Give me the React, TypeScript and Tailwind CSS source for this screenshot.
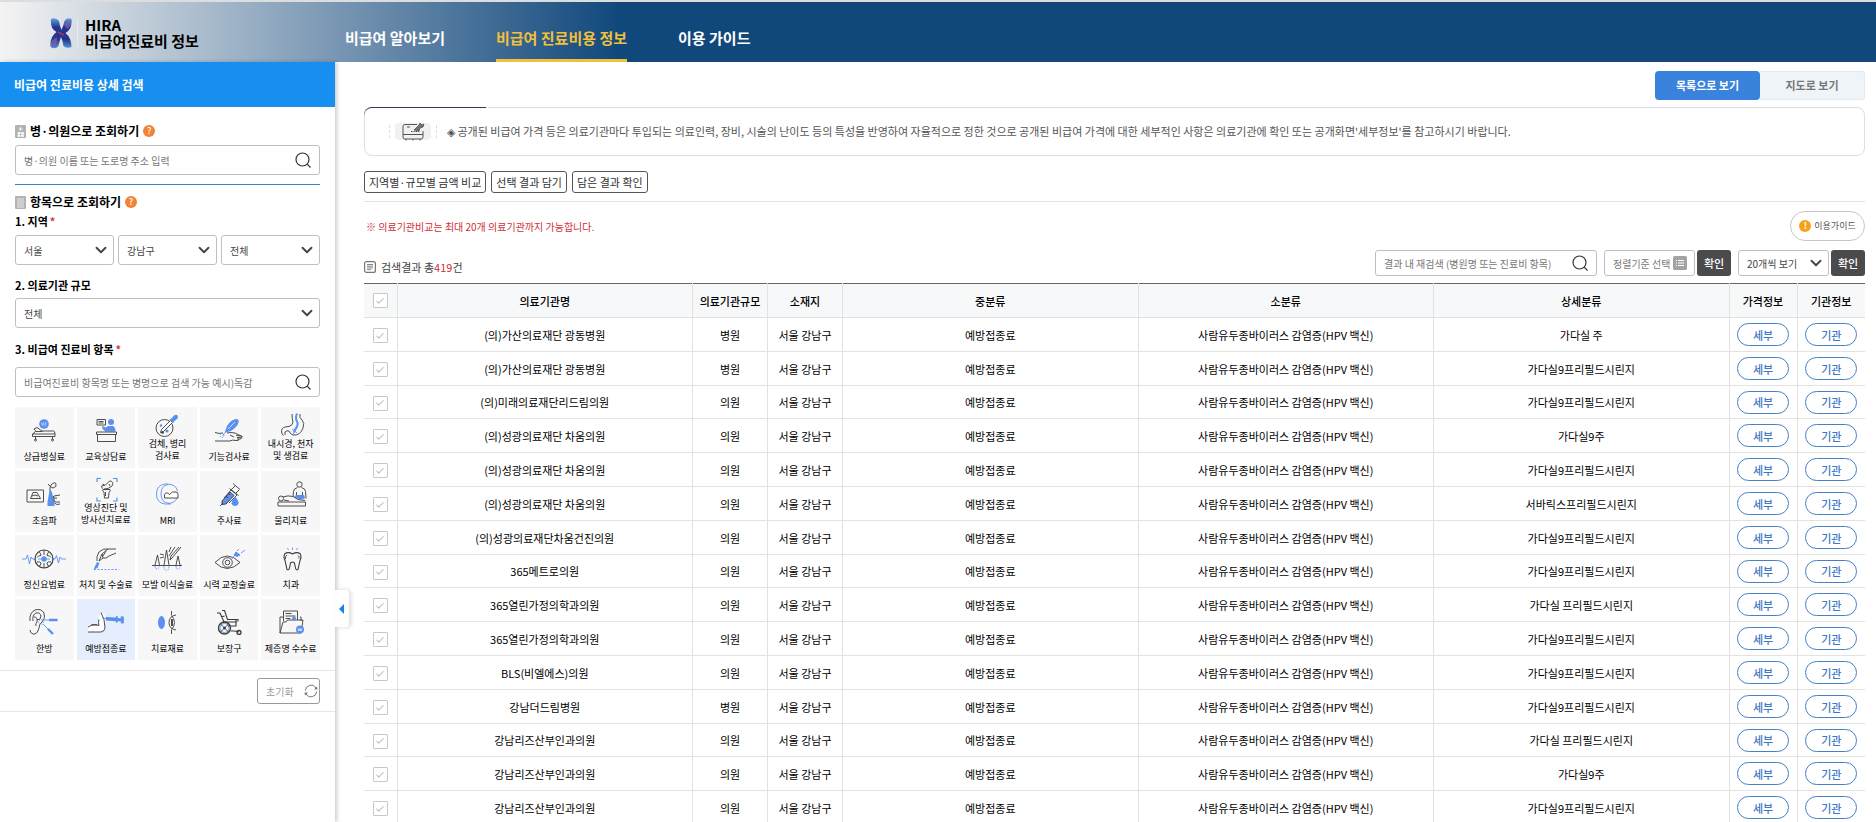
import type { ReactNode } from "react";
import { Check, ChevronDown } from "lucide-react";

type Item = { label: string[]; icon: ReactNode; active?: boolean };

const INK = "#3a3a3a";
const BLUE = "#5b8ff0";

const items: Item[] = [
  {
    label: ["상급병실료"],
    icon: (
      <>
        <circle cx="29" cy="17" r="4.8" fill={BLUE} stroke="none" />
        <path d="M26.5 15.5l1 3 1-3 1 3M30.7 18.5v-3h1" stroke="#dfe9ff" strokeWidth=".6" />
        <path d="M19 22l3-1.500 5 3.500h11.500q1.500 0 1.500 3H17.500v2.500h22.500V27M17.500 27l3-2.500h7M19 22l2 2.500" />
        <path d="M20.500 29.500v3M37.500 29.500v3" />
        <circle cx="20.500" cy="33" r="1" />
        <circle cx="37.500" cy="33" r="1" />
      </>
    ),
  },
  {
    label: ["교육상담료"],
    icon: (
      <>
        <path d="M20 12.500h8.500v5.500H20zM21.500 14.500h5M21.500 16h5" />
        <circle cx="34" cy="15" r="3" fill={BLUE} stroke="none" />
        <path d="M25 19l4 1.500 2-1.500h4.500q3 .5 3 5.500H28.500l-3-2.500z" fill={BLUE} stroke="none" />
        <path d="M19.500 25h20v2.500h-20zM20.500 27.500v7h18v-7" />
      </>
    ),
  },
  {
    label: ["검체, 병리", "검사료"],
    icon: (
      <>
        <circle cx="26.500" cy="21" r="8.500" />
        <path d="M23.500 22.500l9-9 2 2-9 9-3 1z" fill="#fff" />
        <path d="M31.500 12.500l2-1 2.500-3q2.500-1.500 3.500 0t0 3l-3 2.500-1.500 2z" fill={BLUE} stroke="none" />
        <circle cx="23" cy="18.500" r="1.200" fill={BLUE} stroke="none" />
        <circle cx="29" cy="24" r="1.600" fill={BLUE} stroke="none" />
        <circle cx="24.500" cy="25.500" r="1.300" fill={INK} stroke="none" />
      </>
    ),
  },
  {
    label: ["기능검사료"],
    icon: (
      <>
        <path d="M24.500 26l2.500-7q4-6.500 9-7 3.500 0 2.500 3.500-1 4-7.500 8.500z" fill={BLUE} stroke="none" />
        <path d="M28 22l7-7" stroke="#e8f0ff" strokeWidth=".8" />
        <path d="M24.500 26l-2 3" stroke={BLUE} />
        <path d="M15 25.500q4 1.500 8 .5M27 26q4-1 8 0l6 3M36 28.500l6 .5q1 1.500-1.500 1.500H37M41 30.500q1 1.500-1 1.500h-3M39 32q0 2-3 1.500-4-1-6 .5H15M30 28l4 2" />
        <circle cx="22" cy="28.500" r="2" stroke={BLUE} strokeDasharray="1 1" />
      </>
    ),
  },
  {
    label: ["내시경, 천자", "및 생검료"],
    icon: (
      <>
        <path d="M30 7q0 5 1 8 0 3-4 4.500-7 0-7.500 4 0 4 2 5M38 7q-1 4 2 6 3 3 1 8-3 8-10 7-3-1-4-4-2-1-4 1v3" />
        <path d="M35 6.500q-2 5 0 8t-2 8l-1 3" stroke={BLUE} strokeWidth="2" />
        <path d="M30 22l5 4M35 21l-4 6" stroke={BLUE} />
      </>
    ),
  },
  {
    label: ["초음파"],
    icon: (
      <>
        <path d="M12 19h16.500v12H12zM18 21.500h4l3.500 6h-10z" />
        <path d="M17 25q3-2 6 0" />
        <path d="M33 13q3 4 5 4 4-1 3-4t-5 1q-1.500 2-1 7" />
        <path d="M34.500 20h2l3 11v4h-7v-4z" fill={BLUE} stroke="none" />
        <path d="M45 24l-6 1q-2 1 0 2h3M39 27v2q0 2 2 2h4M39.500 32q2 2.500 5.500 1" />
      </>
    ),
  },
  {
    label: ["영상진단 및", "방사선치료료"],
    icon: (
      <>
        <path d="M20 11V7.500h4M36 7.500h4V11M40 26.500V30h-4M24 30h-4v-3.500" stroke={BLUE} strokeWidth="1.200" />
        <path d="M24.500 15l4-1 4-4q2-.5 3 1.500t-.5 3.500l-4 2.500-4 .5M24.500 15q0 2 1.500 2.500M26 18.500h7q1 1-1 3l-.5 5.500h-4l-.5-5.500q-2-2-1-3zM25.500 13l2 1" />
        <path d="M28.500 21v4M32 13l1 2" />
      </>
    ),
  },
  {
    label: ["MRI"],
    icon: (
      <>
        <path d="M33 33h-6q-8.500-1-8.500-10T27 13h2q9 0 10.500 7M39 27q-2 5-9 5.500M31 32.500q-8-1-8-9.500t7-9.500" stroke={BLUE} />
        <path d="M26.500 27v-3.500q1-2 3-1.500l2 1.500 3-2.500h3.500q2 0 2 2.500V27z" fill="#fff" />
      </>
    ),
  },
  {
    label: ["주사료"],
    icon: (
      <>
        <path d="M22 30l8-9 4 3.500-8 8.500-4 .5z" fill={BLUE} />
        <path d="M20 35l3-3M24 27l7-8 6 5-8 8M31 19l4-4M36 22l3-3M29.500 17.500l9 7M33 12.500l7 6M26 25l2 2M28 22l2 2" />
        <path d="M35 25.500q4 4.500 3.500 7-1 2.500-3.500 2.500t-3.500-2.500q0-2.500 3.500-7z" fill={BLUE} stroke="none" />
      </>
    ),
  },
  {
    label: ["물리치료"],
    icon: (
      <>
        <circle cx="37.500" cy="13.500" r="2.700" />
        <path d="M35.500 16.500q-4 1-4 4l-.5 5M39.500 16.500q4 1 4 4l.5 7M34.500 21v4M40.500 21v4" />
        <path d="M34 24h8l1 3q-2 2-6 1l-5-2z" fill={BLUE} stroke="none" />
        <circle cx="19" cy="27.500" r="2.500" />
        <path d="M21 26q5-2 10-.5l5 3 7 1M16 31h27.500v4H16zM22 29l5 1" />
      </>
    ),
  },
  {
    label: ["정신요법료"],
    icon: (
      <>
        <path d="M7 24h4l1.500-4 2 9 1.500-7 1.500 2H21M37 24h3l1.500-3.500 2 7.500 1.500-6 1.500 2H51" stroke={BLUE} />
        <circle cx="29" cy="24" r="9" strokeWidth="1.200" />
        <path d="M29 15v5M29 28v5M24 17.500q2 0 2 3-3 0-4 2M34 17.500q-2 0-2 3 3 0 4 2M22 27q3-1 4 1 0 3-2 3M36 27q-3-1-4 1 0 3 2 3" />
        <circle cx="29" cy="24" r="2.700" fill={BLUE} stroke="none" />
        <path d="M23 24h12" stroke={BLUE} />
      </>
    ),
  },
  {
    label: ["처치 및 수술료"],
    icon: (
      <>
        <path d="M20 27l2.500 1-2 5-4 1.500z" fill={BLUE} stroke="none" />
        <path d="M17 34.500h25" stroke={BLUE} strokeDasharray="2 1.500" />
        <path d="M20 26q-1-4 2-9 4-4 9-3h8M31 14l-6 5-3 7M25 19l1 4q3 1 6-2l7-3M22 26l4-3M29 16l-3 5" />
      </>
    ),
  },
  {
    label: ["모발 이식술료"],
    icon: (
      <>
        <path d="M14 30.500h30M17 30l2.500-10 2 10M26 30l2.500-15 2.500 15M38 30l2-9 2 9" />
        <path d="M43 12l-9 11-2 2 1-4 8-9M37 12l-6 9M33 12l-2 5M22 19l4 1M22 23l4-1" />
        <path d="M26 31q0 4 2.500 5 2.500-1 2.500-5M17 31q0 3 2 3t2-3M38 31q0 3 2 3t2-3" stroke={BLUE} strokeDasharray="1.500 1" />
      </>
    ),
  },
  {
    label: ["시력 교정술료"],
    icon: (
      <>
        <path d="M15 27.500q12-13 25 0-13 12-25 0z" />
        <circle cx="27.500" cy="27.500" r="4.800" />
        <circle cx="27.500" cy="27.500" r="2.300" />
        <path d="M31 25l4-5" stroke={BLUE} />
        <path d="M34 20l2-3 4 3-3 1.500zM37 16l2-2M41 18l4-3" fill={BLUE} stroke={BLUE} />
      </>
    ),
  },
  {
    label: ["치과"],
    icon: (
      <>
        <path d="M30.500 19q4-2.500 7.500-.5 2 3 0 7l-2 9q-2 1-2.500-1.500l-1-5q-2-2-4 0l-1 5q-.5 2.500-2.500 1.500l-2-9q-2-4 0-7 3.500-2 7.500.5z" strokeWidth="1.100" />
        <path d="M25 20q-2 1-1.500 4M36 20.500q1.500 1 1 3" />
        <path d="M30.500 12.500v2.500M25.500 13l1 2M35.500 13l-1 2" stroke={BLUE} />
      </>
    ),
  },
  {
    label: ["한방"],
    icon: (
      <>
        <path d="M15 22q-1-8 5-11 6-2 9 3 2 5-2 9-3 2-3 6-2 7-6 6-3-1-3-4" />
        <path d="M18 22q-1-6 3-8 4-1 5 3 0 4-4 4M19 18q4 0 3 5-2 2-1 4" />
        <path d="M27 21h7M28 25l5 5" stroke={BLUE} />
        <path d="M34 21h8.500M33 30l5 5" stroke={BLUE} strokeWidth="2.400" />
        <circle cx="26" cy="23" r="2.400" stroke={BLUE} strokeDasharray="1 1" />
      </>
    ),
  },
  {
    label: ["예방접종료"],
    active: true,
    icon: (
      <>
        <path d="M11 26q6-1 11 .5V17l3-3 3 2v13q0 3-4 4H11z" fill="#fff" stroke="none" />
        <path d="M11 33h13q4-1 4-4 0-9-4-15.500M14 26q5-1 8 .5-1-3 0-6M11 28q4-3 9-2" />
        <path d="M25 19l4 .5" stroke={BLUE} />
        <path d="M29 18l10 .5v-1.500l1.500 0 .3 2 3 .2v-2l3 .3v7l-3-.3v-2l-3 0-.5 1.500-1.500-.1V22.200L29 21.500z" fill={BLUE} stroke="none" />
      </>
    ),
  },
  {
    label: ["치료재료"],
    icon: (
      <>
        <ellipse cx="23.500" cy="23.500" rx="3.500" ry="6.500" fill={BLUE} stroke="none" />
        <path d="M33.500 12v4M33.500 31v4M38 16q-7 1-7 7.500t7 7.500M33.500 16.500q3 3 3 7t-3 7" />
        <path d="M34 20v7" strokeWidth="1.800" />
      </>
    ),
  },
  {
    label: ["보장구"],
    icon: (
      <>
        <circle cx="24.500" cy="29" r="6" strokeWidth="1.400" />
        <circle cx="24.500" cy="29" r="4.500" stroke={BLUE} />
        <circle cx="24.500" cy="29" r="1" fill={INK} />
        <path d="M20.500 25l8 8M28.500 25l-8 8" />
        <path d="M17 14h3l4 9h13M22 11.500h2.500l3 9H38v2M24.500 17l-3 1M28 27h8V21M31 32h4l4 1" strokeWidth="1.100" />
        <circle cx="39" cy="33.500" r="2" strokeWidth="1.300" />
      </>
    ),
  },
  {
    label: ["제증명 수수료"],
    icon: (
      <>
        <path d="M21.500 22V12h14v9M23.500 14.500h6M23.500 17h10M23.500 19.500h5" />
        <path d="M18 34V18h3M38 18h1v4M18 34l3-11 3 0 1.500-2H41l-2 13z" />
        <circle cx="32" cy="19.500" r="2" fill={BLUE} stroke="none" />
        <circle cx="38" cy="30.500" r="4" fill={BLUE} stroke="none" />
        <path d="M36 29.500l1 2.500 1-2.500 1 2.500 1-2.500" stroke="#fff" strokeWidth=".7" />
      </>
    ),
  },
];

const rows = [
  ["(의)가산의료재단 광동병원", "병원", "가다실 주"],
  ["(의)가산의료재단 광동병원", "병원", "가다실9프리필드시린지"],
  ["(의)미래의료재단리드림의원", "의원", "가다실9프리필드시린지"],
  ["(의)성광의료재단 차움의원", "의원", "가다실9주"],
  ["(의)성광의료재단 차움의원", "의원", "가다실9프리필드시린지"],
  ["(의)성광의료재단 차움의원", "의원", "서바릭스프리필드시린지"],
  ["(의)성광의료재단차움건진의원", "의원", "가다실9프리필드시린지"],
  ["365메트로의원", "의원", "가다실9프리필드시린지"],
  ["365열린가정의학과의원", "의원", "가다실 프리필드시린지"],
  ["365열린가정의학과의원", "의원", "가다실9프리필드시린지"],
  ["BLS(비엘에스)의원", "의원", "가다실9프리필드시린지"],
  ["강남더드림병원", "병원", "가다실9프리필드시린지"],
  ["강남리즈산부인과의원", "의원", "가다실 프리필드시린지"],
  ["강남리즈산부인과의원", "의원", "가다실9주"],
  ["강남리즈산부인과의원", "의원", "가다실9프리필드시린지"],
];

function SearchIcon() {
  return (
    <svg viewBox="0 0 16 16" className="size-4" fill="none" stroke="#333" strokeWidth="1.200">
      <circle cx="7.500" cy="7.500" r="6.500" />
      <path d="M12.200 12.200L15.500 15.500" />
    </svg>
  );
}

function SearchField({ label, placeholder, className }: { label: string; placeholder: string; className: string }) {
  return (
    <div className={`flex items-center rounded-[3px] border border-[#bfbfbf] bg-white pr-2 pl-2 ${className}`}>
      <input
        type="text"
        aria-label={label}
        placeholder={placeholder}
        className="h-full min-w-0 flex-1 text-[10px] outline-none placeholder:text-[#777]"
      />
      <button type="button" aria-label="검색">
        <SearchIcon />
      </button>
    </div>
  );
}

function SelectField({ label, value, className }: { label: string; value: string; className: string }) {
  return (
    <div className={`relative ${className}`}>
      <select
        aria-label={label}
        className="block h-full w-full appearance-none rounded-[3px] border border-[#bfbfbf] bg-white pl-2 text-[10px] text-[#444]"
      >
        <option>{value}</option>
      </select>
      <ChevronDown className="pointer-events-none absolute inset-y-0 right-1 my-auto size-[18px] text-[#444]" strokeWidth={2.5} />
    </div>
  );
}

function HelpButton() {
  return (
    <button
      type="button"
      aria-label="도움말"
      className="flex size-3 items-center justify-center rounded-full bg-[#f58233] text-[9px] font-medium text-white"
    >
      ?
    </button>
  );
}

function CheckBox({ label }: { label: string }) {
  return (
    <span className="relative mx-auto block size-[15px]">
      <input type="checkbox" aria-label={label} className="block size-full appearance-none rounded-[1px] border border-[#c8c8c8] bg-white" />
      <Check className="pointer-events-none absolute inset-0 m-auto size-2.5 text-[#bbb]" strokeWidth={2.5} />
    </span>
  );
}

function Header() {
  return (
    <header className="flex h-[62px] shrink-0 border-t-2 border-[#dcdddf] bg-[linear-gradient(90deg,#f4f4f4_0%,#11487c_33%)]">
      <a href="#" className="flex w-[345px] shrink-0 items-center pt-0.5 pl-[50px]">
        <svg viewBox="0 0 22 32" className="h-8 w-[22px]">
          <defs>
            <linearGradient id="wing" x1="0" y1="0" x2="0" y2="1">
              <stop offset="0" stopColor="#5aa5dc" />
              <stop offset=".3" stopColor="#26348f" />
              <stop offset=".7" stopColor="#26348f" />
              <stop offset="1" stopColor="#4e9bd8" />
            </linearGradient>
          </defs>
          <path
            d="M1 2Q6 0 9 4q1 6 2.500 9 1.500-3 3-9 2-4 7-2 1 10-6 14 6 5 6 14-5 2-8-1-1-6-2.500-9-1.500 4-2.500 9-3 4-8 1-1-10 6-15Q0 12 1 2z"
            fill="url(#wing)"
          />
          <path d="M14 7q3-4 7-3 0 6-4 8zM1 25q4-5 6-4 0 6-2 9-3 1-4-1z" fill="#7c5fa8" opacity=".75" />
          <path d="M8 15l6 3" stroke="#c33b5e" strokeWidth="1.200" />
        </svg>
        <span className="ml-[5px] h-7 w-px bg-white/40" />
        <span className="ml-[7px] flex flex-col text-[15px] leading-[16px] font-bold text-black">
          <span className="block">HIRA</span>
          <span className="block">비급여진료비 정보</span>
        </span>
      </a>
      <nav className="flex items-stretch gap-[51px] text-[15px] font-bold text-white">
        <a href="#" className="flex items-center pt-3">
          비급여 알아보기
        </a>
        <a href="#" className="flex items-center border-b-3 border-[#f3c03a] pt-[15px] text-[#f3c03a]">
          비급여 진료비용 정보
        </a>
        <a href="#" className="flex items-center pt-3">
          이용 가이드
        </a>
      </nav>
    </header>
  );
}

function Sidebar() {
  return (
    <aside className="relative z-10 w-[335px] shrink-0 bg-white shadow-[2px_0_4px_rgba(0,0,0,0.2)]">
      <h2 className="flex h-[45px] items-center bg-[#178ff0] pl-3.5 text-[12px] font-bold text-white">비급여 진료비용 상세 검색</h2>
      <div className="px-[15px] pt-4">
        <div className="flex h-4 items-center gap-1">
          <svg viewBox="0 0 11 13" className="h-[13px] w-[11px]">
            <rect width="11" height="13" rx="1" fill="#b3b3b3" />
            <path d="M5.500 2v4M3.500 4h4M3 7.500h2v1.500H3zM6.500 7.500h2v1.500h-2zM3 10h2v1.500H3zM6.500 10h2v1.500h-2z" stroke="#fff" strokeWidth=".8" fill="#fff" />
          </svg>
          <h3 className="text-[12px] font-bold text-black">병·의원으로 조회하기</h3>
          <HelpButton />
        </div>
        <SearchField label="병·의원 검색" placeholder="병·의원 이름 또는 도로명 주소 입력" className="mt-1.5 h-[30px]" />
        <div className="mt-[9px] border-t border-[#3a83bf]" />
        <div className="mt-[9px] flex h-4 items-center gap-1">
          <svg viewBox="0 0 11 13" className="h-[13px] w-[11px]">
            <rect width="11" height="13" rx="1" fill="#b3b3b3" />
            <path d="M2 3h7M2 5h7M2 7h7M2 9h7M2 11h7" stroke="#fff" strokeWidth=".7" />
          </svg>
          <h3 className="text-[12px] font-bold text-black">항목으로 조회하기</h3>
          <HelpButton />
        </div>
        <h4 className="mt-1 flex h-3.5 items-center gap-0.5 text-[11px] font-bold text-black">
          1. 지역 <span className="text-[#d8353f]">*</span>
        </h4>
        <div className="mt-[7px] grid grid-cols-3 gap-1">
          <SelectField label="시도" value="서울" className="h-[30px]" />
          <SelectField label="시군구" value="강남구" className="h-[30px]" />
          <SelectField label="읍면동" value="전체" className="h-[30px]" />
        </div>
        <h4 className="mt-[13px] flex h-3.5 items-center text-[11px] font-bold text-black">2. 의료기관 규모</h4>
        <SelectField label="의료기관 규모" value="전체" className="mt-1.5 h-[30px]" />
        <h4 className="mt-3.5 flex h-3.5 items-center gap-0.5 text-[11px] font-bold text-black">
          3. 비급여 진료비 항목 <span className="text-[#d8353f]">*</span>
        </h4>
        <SearchField
          label="비급여 진료비 항목 검색"
          placeholder="비급여진료비 항목명 또는 병명으로 검색 가능 예시)독감"
          className="mt-[11px] h-[30px]"
        />
        <div className="mt-2.5 grid grid-cols-5 gap-[3px]">
          {items.map((item) => {
            const twoLines = item.label.length > 1;
            return (
              <button
                key={item.label.join(" ")}
                type="button"
                className={`flex h-[61px] flex-col items-center ${item.active ? "bg-[#e5eefd]" : "bg-[#f7f7f8]"}`}
              >
                <svg
                  viewBox={twoLines ? "0 0 58 31" : "0 0 58 36"}
                  className={`w-[58px] shrink-0 ${twoLines ? "h-[31px]" : "h-9"}`}
                  fill="none"
                  stroke={INK}
                  strokeWidth=".9"
                  strokeLinejoin="round"
                >
                  {item.icon}
                </svg>
                <span className={`text-[9px] leading-[12px] whitespace-nowrap text-black ${twoLines ? "" : "mt-2"}`}>
                  {item.label.map((line) => (
                    <span key={line} className="block">
                      {line}
                    </span>
                  ))}
                </span>
              </button>
            );
          })}
        </div>
      </div>
      <div className="mt-2.5 flex justify-end border-y border-[#e6e6e6] py-[7px] pr-[15px]">
        <button
          type="button"
          className="flex h-[26px] w-[63px] items-center justify-between rounded-[3px] border border-[#999] pr-px pl-2 text-[10px] text-[#999]"
        >
          초기화
          <svg viewBox="0 0 14 14" className="size-3.5" fill="none" stroke="#777">
            <path d="M1.300 6.500A5.700 5.700 0 0 1 12 4.200M12.700 7.500A5.700 5.700 0 0 1 2 9.800" />
            <path d="M10 5.500h3.500L13 2.500zM4 8.500H.5L1 11.500z" fill="#777" stroke="none" />
          </svg>
        </button>
      </div>
      <button
        type="button"
        aria-label="검색창 접기"
        className="absolute top-[528px] -right-3.5 flex h-[37px] w-3.5 items-center justify-center rounded-r-[3px] bg-white pr-0.5 shadow-[2px_0_4px_rgba(0,0,0,0.15)]"
      >
        <svg viewBox="0 0 5 10" className="h-2.5 w-[5px]">
          <path d="M5 0v10L0 5z" fill="#1583ee" />
        </svg>
      </button>
    </aside>
  );
}

function Toolbar() {
  return (
    <div className="mt-[9px] flex h-[26px] items-stretch">
      <p className="flex flex-1 items-center gap-[5px] pt-2 text-[11px] text-[#444]">
        <svg viewBox="0 0 12 12" className="size-3" fill="none" stroke="#777">
          <rect x=".6" y=".6" width="10.800" height="10.800" rx="2" strokeWidth="1.200" />
          <path d="M3 3.500h6M3 5.200h6M3 6.900h6M3 8.600h4" strokeWidth=".9" />
        </svg>
        <span>
          검색결과 총<span className="text-[#cf2e38]">419</span>건
        </span>
      </p>
      <SearchField label="결과 내 재검색" placeholder="결과 내 재검색 (병원명 또는 진료비 항목)" className="w-[222px]" />
      <button
        type="button"
        className="ml-[7px] flex w-[91px] items-center justify-between rounded-[3px] border border-[#bfbfbf] pr-[7px] pl-2 text-[10px] text-[#777]"
      >
        정렬기준 선택
        <svg viewBox="0 0 14 14" className="size-3.5">
          <rect width="14" height="14" rx="1.500" fill="#a3a3a3" />
          <path d="M3 4.500h1M3 7h1M3 9.500h1M5 4.500h6M5 7h6M5 9.500h6" stroke="#fff" />
        </svg>
      </button>
      <button type="button" className="ml-0.5 w-[34px] rounded-[3px] bg-[#4b4b4d] text-[11px] font-medium text-white">
        확인
      </button>
      <SelectField label="페이지당 개수" value="20개씩 보기" className="ml-[7px] w-[91px]" />
      <button type="button" className="ml-0.5 w-[34px] rounded-[3px] bg-[#4b4b4d] text-[11px] font-medium text-white">
        확인
      </button>
    </div>
  );
}

function ResultTable() {
  const pill = "h-[23px] w-[52px] rounded-full border border-[#4580c8] align-middle text-[11px] font-medium text-[#3f78c4]";
  return (
    <table className="mt-[7px] w-full table-fixed border-collapse border-t border-[#666] text-center text-[11px] leading-[16px] text-black">
      <colgroup>
        <col className="w-[33px]" />
        <col />
        <col className="w-[75px]" />
        <col className="w-[75px]" />
        <col />
        <col />
        <col />
        <col className="w-[68px]" />
        <col className="w-[68px]" />
      </colgroup>
      <thead>
        <tr className="h-[34px] divide-x divide-[#e2e2e2] border-b border-[#e2e2e2] bg-[#f6f8fa]">
          <th>
            <CheckBox label="전체 선택" />
          </th>
          {["의료기관명", "의료기관규모", "소재지", "중분류", "소분류", "상세분류", "가격정보", "기관정보"].map((name) => (
            <th key={name} className="font-medium">
              {name}
            </th>
          ))}
        </tr>
      </thead>
      <tbody>
        {rows.map(([name, size, detail], i) => (
          <tr key={i} className="h-[34px] divide-x divide-[#e2e2e2] border-b border-[#e2e2e2] nth-[5n+3]:h-[33px]">
            <td className="pt-0.5">
              <CheckBox label={`${name} 선택`} />
            </td>
            <td>{name}</td>
            <td>{size}</td>
            <td>서울 강남구</td>
            <td>예방접종료</td>
            <td>사람유두종바이러스 감염증(HPV 백신)</td>
            <td>{detail}</td>
            <td>
              <button type="button" className={pill}>
                세부
              </button>
            </td>
            <td>
              <button type="button" className={pill}>
                기관
              </button>
            </td>
          </tr>
        ))}
      </tbody>
    </table>
  );
}

export default function App() {
  return (
    <div className="flex h-screen flex-col overflow-hidden bg-white font-['Noto_Sans_CJK_KR',sans-serif]">
      <Header />
      <div className="flex min-h-0 flex-1">
        <Sidebar />
        <main className="min-w-0 flex-1 pt-[9px] pr-[11px] pl-[29px]">
          <div className="flex h-[29px] justify-end text-[11px] font-bold">
            <button type="button" className="w-[105px] rounded-[4px] bg-[#3a83dc] text-white">
              목록으로 보기
            </button>
            <button type="button" className="w-[105px] rounded-r-[3px] border border-l-0 border-[#e2eaf0] bg-[#eff4f9] text-[#777]">
              지도로 보기
            </button>
          </div>

          <div className="relative mt-[7px] flex h-[49px] items-center rounded-lg border border-[#dcdfe4] text-[11px] text-[#555]">
            <span className="absolute -top-px -left-px h-2 w-[122px] rounded-tl-lg border-t border-[#2c3a5c]" />
            <svg viewBox="0 0 48 20" className="ml-6 h-5 w-12" fill="none" stroke="#555">
              <rect x="6" y="1" width="36" height="17" rx="4" fill="#f1f1f1" stroke="none" />
              <path d="M.5 3v15M47.500 3v15" stroke="#ddd" strokeDasharray="3 2" />
              <path d="M28 2.500H16q-2 0-2 2V15q0 2 2 2h16q2 0 2-2V9M14 12.500h20M17 17v1.500M24 17v1.500M31 17v1.500M18 5h3" />
              <path d="M22 9.500h9" strokeDasharray="1.500 .8" />
              <path d="M25 8l5-5 1-2 2 2 2-1-1 3-3 1-1 3z" fill="#6c7680" stroke="#444" strokeWidth=".7" />
            </svg>
            <p className="ml-2.5">
              ◈ 공개된 비급여 가격 등은 의료기관마다 투입되는 의료인력, 장비, 시술의 난이도 등의 특성을 반영하여 자율적으로 정한 것으로 공개된 비급여
              가격에 대한 세부적인 사항은 의료기관에 확인 또는 공개화면'세부정보'를 참고하시기 바랍니다.
            </p>
          </div>

          <div className="mt-[15px] flex gap-[5px] border-b border-[#e2e2e2] pb-2 text-[11px] text-[#333]">
            {["지역별·규모별 금액 비교", "선택 결과 담기", "담은 결과 확인"].map((name) => (
              <button key={name} type="button" className="h-[22px] rounded-[3px] border border-[#555] px-1">
                {name}
              </button>
            ))}
          </div>

          <div className="mt-[9px] flex h-[30px] items-center justify-between">
            <p className="pl-0.5 text-[10px] text-[#cf2e38]">※ 의료기관비교는 최대 20개 의료기관까지 가능합니다.</p>
            <button
              type="button"
              className="flex h-full w-[75px] items-center justify-center gap-[3px] rounded-full border border-[#c6c6cc] text-[9px] text-[#555]"
            >
              <span className="flex size-3 items-center justify-center rounded-full bg-[#f7a118] text-[9px] font-bold text-white">!</span>
              이용가이드
            </button>
          </div>

          <Toolbar />
          <ResultTable />
        </main>
      </div>
    </div>
  );
}
